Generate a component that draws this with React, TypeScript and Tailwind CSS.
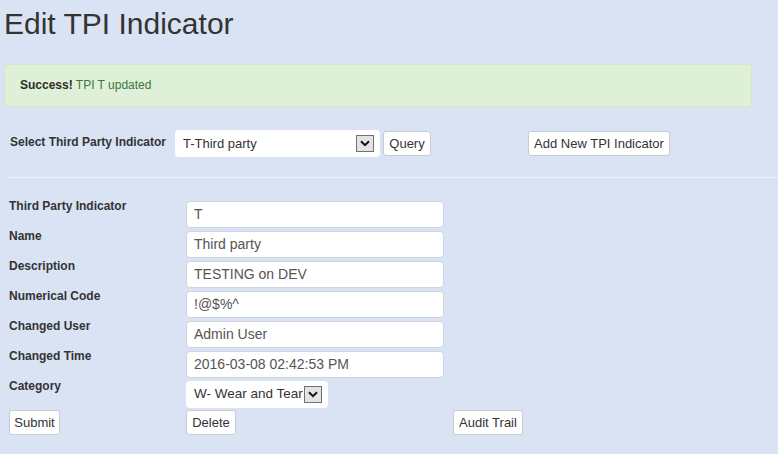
import React from "react";

function Arrow() {
  return (
    <span className="flex h-[17px] w-[18px] shrink-0 items-center justify-center border border-[#707070] bg-[#e3e3e3]">
      <svg width="10" height="7" viewBox="0 0 10 7">
        <path d="M1 1.2 L5 5.2 L9 1.2" fill="none" stroke="#111" strokeWidth="2" />
      </svg>
    </span>
  );
}

function Btn({ children, className = "" }: { children: React.ReactNode; className?: string }) {
  return (
    <button
      className={
        "flex h-[25px] items-center justify-center whitespace-nowrap rounded-[3px] border border-[#c8ccd2] bg-white text-[13px] leading-none text-[#333] " +
        className
      }
    >
      {children}
    </button>
  );
}

function Field({ value }: { value: string }) {
  return (
    <div className="mt-[4px] flex h-[27px] w-[258px] items-center rounded-[4px] border border-[#cdd5e1] bg-white pl-[7px] text-[14px] text-[#555]">
      {value}
    </div>
  );
}

export default function App() {
  const rows: [string, string][] = [
    ["Third Party Indicator", "T"],
    ["Name", "Third party"],
    ["Description", "TESTING on DEV"],
    ["Numerical Code", "!@$%^"],
    ["Changed User", "Admin User"],
    ["Changed Time", "2016-03-08 02:42:53 PM"],
  ];
  return (
    <div className="h-[454px] w-[778px] overflow-hidden bg-[#d9e3f4] font-['Liberation_Sans',Arial,sans-serif] text-[#333]">
      <h1 className="pl-[4px] pt-[7px] text-[30px] font-normal leading-[33px] text-[#333]">Edit TPI Indicator</h1>

      <div className="ml-[4px] mt-[24px] h-[43px] w-[748px] rounded-[4px] border border-[#d3e7c4] bg-[#dff0d8] px-[15px] pt-[12px] text-[12px] leading-[17px] text-[#3c763d]">
        <b className="text-[#2b2b2b]">Success!</b> TPI T updated
      </div>

      <div className="mt-[23px] flex h-[27px] items-center">
        <div className="-mt-[2px] w-[175px] pl-[10px] text-[12px] font-bold leading-[17px]">Select Third Party Indicator</div>
        <div className="flex h-[27px] w-[205px] items-center justify-between rounded-[4px] bg-white pl-[8px] pr-[6px] text-[13px] text-[#333]">
          <span>T-Third party</span>
          <Arrow />
        </div>
        <Btn className="ml-[3px] w-[48px]">Query</Btn>
        <Btn className="ml-[97px] w-[142px]">Add New TPI Indicator</Btn>
      </div>

      <div className="ml-[8px] mt-[20px] border-t border-[#eef3fb]" />

      <div className="mt-[19px]">
        {rows.map(([l, v]) => (
          <div key={l} className="flex h-[30px] items-start">
            <div className="w-[186px] pl-[9px] pt-[1px] text-[12px] font-bold leading-[17px]">{l}</div>
            <Field value={v} />
          </div>
        ))}
        <div className="flex h-[30px] items-start">
          <div className="w-[186px] pl-[9px] pt-[1px] text-[12px] font-bold leading-[17px]">Category</div>
          <div className="mt-[4px] flex h-[27px] w-[142px] items-center justify-between overflow-hidden whitespace-nowrap rounded-[4px] bg-white pl-[8px] pr-[6px] text-[13.5px] text-[#333]">
            <span>W- Wear and Tear</span>
            <Arrow />
          </div>
        </div>
        <div className="flex items-start pt-[3px]">
          <Btn className="ml-[9px] w-[51px]">Submit</Btn>
          <Btn className="ml-[126px] w-[50px]">Delete</Btn>
          <Btn className="ml-[217px] w-[70px]">Audit Trail</Btn>
        </div>
      </div>
    </div>
  );
}
